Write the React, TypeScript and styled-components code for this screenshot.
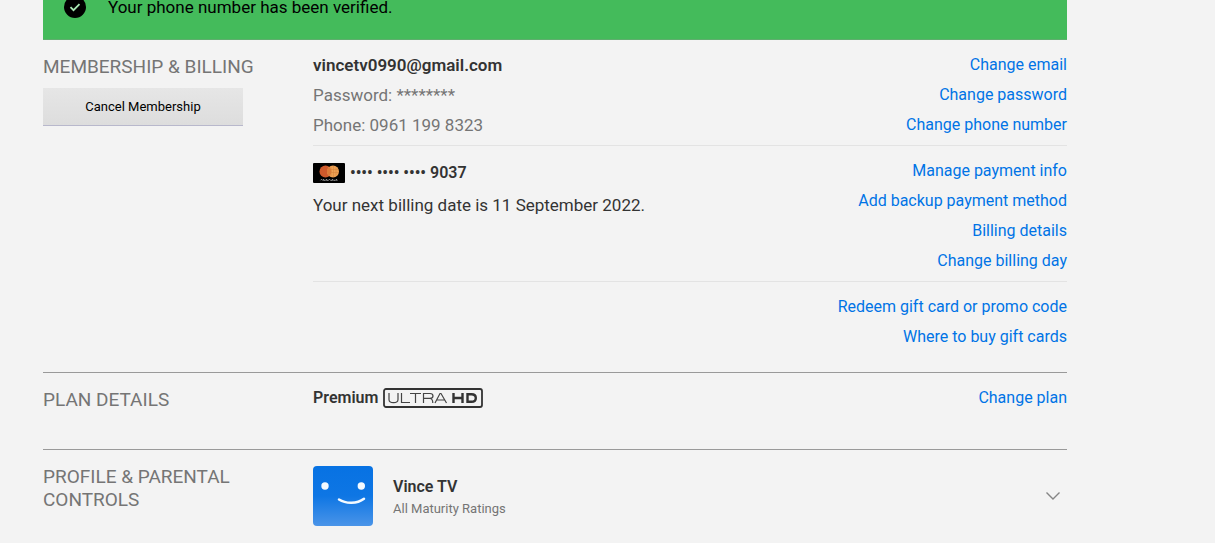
import React from "react";
import styled, { createGlobalStyle } from "styled-components";

const GlobalStyle = createGlobalStyle`
  * { box-sizing: border-box; }
  body {
    margin: 0;
    background: #f3f3f3;
    color: #333;
    font-family: Roboto, "Liberation Sans", sans-serif;
    font-size: 16px;
    line-height: 30px;
    overflow-x: hidden;
  }
`;

const Page = styled.main`
  margin: -26px 148px 0 43px;
`;

const Banner = styled.div`
  display: flex;
  align-items: center;
  gap: 22px;
  height: 66px;
  padding-left: 21px;
  background: #44bb5b;
  border-bottom: 1px solid #5fae6e;
  color: #000;
  font-size: 17px;

  svg { display: block; }
`;

const Section = styled.section`
  display: grid;
  grid-template-columns: 270px 1fr;
  padding: 10px 0 20px;

  & + & { border-top: 1px solid #999; }
  &:last-child { padding-bottom: 16px; }
`;

const Heading = styled.h2`
  margin: 0;
  padding: 5px 30px 0 0;
  color: #757575;
  font-size: 19px;
  font-weight: 400;
  line-height: 23px;
`;

const CancelButton = styled.button`
  width: 200px;
  height: 38px;
  margin-top: 10px;
  border: 0;
  border-bottom: 1px solid #b8b8cc;
  background: linear-gradient(#e6e6e6, #dddddd);
  color: #000;
  font: 400 13px Roboto, "Liberation Sans", sans-serif;
  cursor: pointer;
`;

const Content = styled.div<{ $minHeight?: number }>`
  min-width: 0;
  min-height: ${(p) => p.$minHeight ?? 0}px;
`;

const Group = styled.div`
  display: flex;
  justify-content: space-between;

  & + & {
    margin-top: 5px;
    padding-top: 10px;
    border-top: 1px solid #e3e3e3;
  }
`;

const Column = styled.div``;

const Links = styled.nav`
  display: flex;
  flex-direction: column;
  align-items: flex-end;
  margin-left: auto;
`;

const Link = styled.a`
  color: #0073e6;
  text-decoration: none;
`;

const Line = styled.div<{ $strong?: boolean; $muted?: boolean }>`
  font-size: 17px;
  font-weight: ${(p) => (p.$strong ? 600 : 400)};
  color: ${(p) => (p.$muted ? "#757575" : "#333")};
`;

const Payment = styled(Line)`
  display: flex;
  align-items: center;
  gap: 5px;
  height: 34px;
  font-size: 16px;
`;

const Plan = styled(Line)`
  display: flex;
  align-items: center;
  gap: 5px;
  font-size: 16px;
`;

const ProfileButton = styled.button`
  display: flex;
  align-items: center;
  width: 100%;
  margin: 0;
  padding: 6px 6px 0 0;
  border: 0;
  background: none;
  color: #333;
  font: inherit;
  text-align: left;
  cursor: pointer;

  svg { flex: none; }
`;

const ProfileText = styled.span`
  display: flex;
  flex-direction: column;
  flex: 1;
  margin-left: 20px;
  padding-top: 3px;
  line-height: 22px;
`;

const ProfileName = styled.strong`
  font-size: 16px;
  font-weight: 600;
`;

const Rating = styled.span`
  color: #757575;
  font-size: 13px;
`;

const CheckIcon = () => (
  <svg width="22" height="22" viewBox="0 0 22 22" aria-hidden="true">
    <circle cx="11" cy="11" r="11" fill="#000" />
    <path d="M6.5 11.2l3 3 6-6" fill="none" stroke="#a9e8b4" strokeWidth="1.8" />
  </svg>
);

const CardIcon = () => (
  <svg width="32" height="20" viewBox="0 0 32 20" role="img" aria-label="Mastercard">
    <rect width="32" height="20" rx="1" fill="#000" />
    <circle cx="12.5" cy="8.5" r="6" fill="#cf5a2c" />
    <circle cx="20" cy="8.5" r="6" fill="#eca052" />
    <path d="M16.2 3.8a6 6 0 0 1 0 9.4a6 6 0 0 1 0-9.4z" fill="#dc7b39" />
    <path d="M18 4v9M20.5 3v11M23 4.500v8M16 6.500h9M15 9.500h10" stroke="#d3813d" strokeWidth=".5" />
    <path d="M7.500 17.300l1-1 1 1 1-1v1h2l1-1v1h2l1-1 1 1h2v-1l1 1h2l1-1v1h1" fill="none" stroke="#bbb" strokeWidth=".8" />
  </svg>
);

const UltraHdBadge = () => (
  <svg width="100" height="20" viewBox="0 0 100 20" role="img" aria-label="Ultra HD">
    <rect x="1" y="1" width="98" height="18" rx="2" fill="none" stroke="#333" strokeWidth="1.8" />
    <g fill="none" stroke="#444" strokeWidth="1.2">
      <path d="M6 5v6.500q0 3.200 4.500 3.200t4.500-3.200V5" />
      <path d="M18.500 5v9.500H27" />
      <path d="M27 5.500h11M32.500 5.500V15" />
      <path d="M40.500 15V5.500h6.500q3 0 3 2.400t-3 2.400h-6.500M47 10.500q2.800.2 2.800 4.500" />
      <path d="M52 15l5-9.500h1l5.500 9.500M54 12h7.500" />
    </g>
    <g fill="none" stroke="#333" strokeWidth="2.400">
      <path d="M70.500 5v10M79.500 5v10M70.500 10h9" />
      <path d="M84.500 6.200h4q4.300 0 4.300 3.800t-4.300 3.800h-4z" />
    </g>
  </svg>
);

const Avatar = () => (
  <svg width="60" height="60" viewBox="0 0 60 60" aria-hidden="true">
    <defs>
      <linearGradient id="avatarFill" x1="0" y1="0" x2="0" y2="1">
        <stop offset="0" stopColor="#0772e3" />
        <stop offset=".5" stopColor="#0e76e4" />
        <stop offset="1" stopColor="#4a94e8" />
      </linearGradient>
    </defs>
    <rect width="60" height="60" rx="4" fill="url(#avatarFill)" />
    <circle cx="12" cy="20" r="3.700" fill="#f4faff" />
    <circle cx="48.300" cy="20" r="3.700" fill="#f4faff" />
    <path d="M26 33.500c7 4.500 18 4.500 25-.8" fill="none" stroke="#f4faff" strokeWidth="2.500" strokeLinecap="round" />
  </svg>
);

const Chevron = () => (
  <svg width="16" height="10" viewBox="0 0 16 10" aria-hidden="true">
    <path d="M1.500 1.500L8 8l6.500-6.500" fill="none" stroke="#858585" strokeWidth="1.400" />
  </svg>
);

const LinkList = ({ items }: { items: string[] }) => (
  <Links>
    {items.map((item) => (
      <Link key={item} href="#">{item}</Link>
    ))}
  </Links>
);

export default function App() {
  return (
    <>
      <GlobalStyle />
      <Page>
        <Banner role="status">
          <CheckIcon />
          Your phone number has been verified.
        </Banner>

        <Section>
          <div>
            <Heading>MEMBERSHIP &amp; BILLING</Heading>
            <CancelButton type="button">Cancel Membership</CancelButton>
          </div>
          <Content>
            <Group>
              <Column>
                <Line $strong>vincetv0990@gmail.com</Line>
                <Line $muted>Password: ********</Line>
                <Line $muted>Phone: 0961 199 8323</Line>
              </Column>
              <LinkList items={["Change email", "Change password", "Change phone number"]} />
            </Group>
            <Group>
              <Column>
                <Payment $strong>
                  <CardIcon />
                  •••• •••• •••• 9037
                </Payment>
                <Line>Your next billing date is 11 September 2022.</Line>
              </Column>
              <LinkList
                items={["Manage payment info", "Add backup payment method", "Billing details", "Change billing day"]}
              />
            </Group>
            <Group>
              <LinkList items={["Redeem gift card or promo code", "Where to buy gift cards"]} />
            </Group>
          </Content>
        </Section>

        <Section>
          <Heading>PLAN DETAILS</Heading>
          <Content $minHeight={46}>
            <Group>
              <Plan $strong>
                Premium
                <UltraHdBadge />
              </Plan>
              <LinkList items={["Change plan"]} />
            </Group>
          </Content>
        </Section>

        <Section>
          <Heading>PROFILE &amp; PARENTAL CONTROLS</Heading>
          <Content>
            <ProfileButton type="button" aria-expanded="false">
              <Avatar />
              <ProfileText>
                <ProfileName>Vince TV</ProfileName>
                <Rating>All Maturity Ratings</Rating>
              </ProfileText>
              <Chevron />
            </ProfileButton>
          </Content>
        </Section>
      </Page>
    </>
  );
}
